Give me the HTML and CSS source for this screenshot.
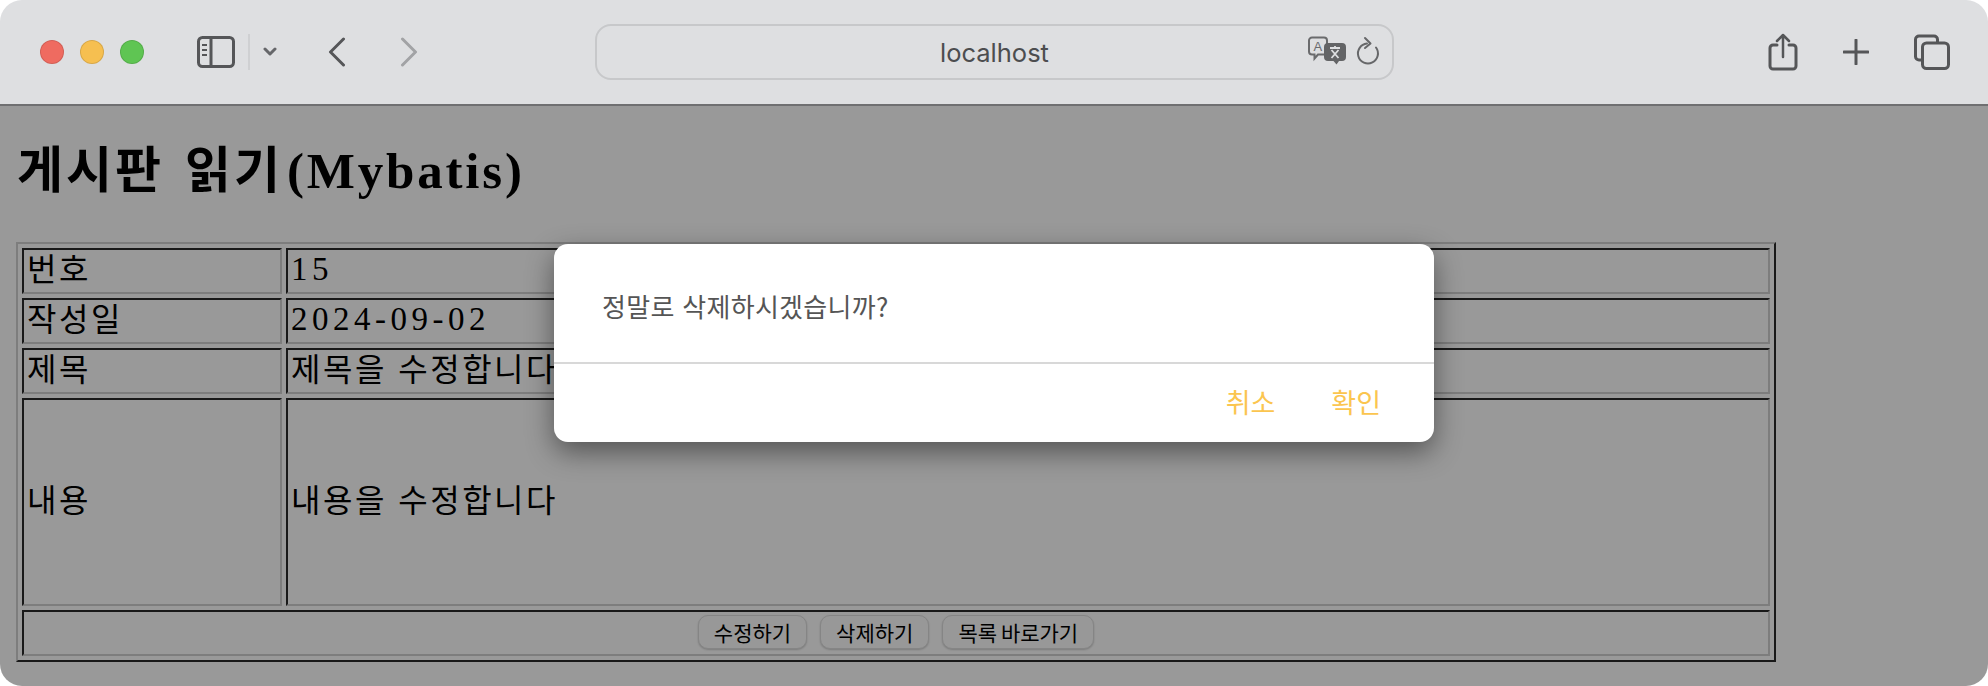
FILE: index.html
```html
<!DOCTYPE html>
<html lang="ko">
<head>
    <meta charset="UTF-8">
    <title>게시판 읽기</title>
    <link rel="stylesheet" href="styles.css">
</head>
<body>

<div class="window">
    <div class="toolbar">
        <span class="light red"></span>
        <span class="light yellow"></span>
        <span class="light green"></span>

        <svg class="ic-sidebar" width="38" height="32" viewBox="0 0 38 32" fill="none" stroke="#555658" stroke-width="3">
            <rect x="1.5" y="1.5" width="35" height="29" rx="4"/>
            <path d="M14 2v28"/>
            <path d="M5 9h5M5 14h5M5 19h5" stroke-width="2"/>
        </svg>
        <span class="sep"></span>
        <svg class="ic-down" width="14" height="10" viewBox="0 0 14 10" fill="none" stroke="#66676a" stroke-width="3" stroke-linecap="round" stroke-linejoin="round">
            <path d="M2 2l5 5 5-5"/>
        </svg>
        <svg class="ic-back" width="18" height="30" viewBox="0 0 18 30" fill="none" stroke="#555658" stroke-width="3" stroke-linecap="round" stroke-linejoin="round">
            <path d="M15.500 2L2.500 15l13 13"/>
        </svg>
        <svg class="ic-next" width="18" height="30" viewBox="0 0 18 30" fill="none" stroke="#a2a3a5" stroke-width="3" stroke-linecap="round" stroke-linejoin="round">
            <path d="M2.500 2l13 13-13 13"/>
        </svg>

        <div class="address">
            <span class="host">localhost</span>
            <div class="address-icons">
                <svg class="ic-translate" width="40" height="30" viewBox="0 0 40 30">
                    <path d="M4 1.500h12a3 3 0 0 1 3 3v11a3 3 0 0 1-3 3H10l-3.500 4v-4H4a3 3 0 0 1-3-3v-11a3 3 0 0 1 3-3z" fill="none" stroke="#6a6b6d" stroke-width="2"/>
                    <text x="5.500" y="15" class="ta">A</text>
                    <path d="M20 7h14a4 4 0 0 1 4 4v10a4 4 0 0 1-4 4h-3l-2.500 3.500-3-3.500H20a4 4 0 0 1-4-4V11a4 4 0 0 1 4-4z" fill="#636466"/>
                    <path d="M22 12h10M27 10v2M23.500 14l7 8M30.500 14l-7 8" fill="none" stroke="#dedfe1" stroke-width="1.800"/>
                </svg>
                <svg class="ic-reload" width="26" height="30" viewBox="0 0 26 30" fill="none" stroke="#666769" stroke-width="2" stroke-linecap="round" stroke-linejoin="round">
                    <path d="M12 7.500A10 10 0 1 0 21 11.500"/>
                    <path d="M10 2l5.500 5.500L10 12"/>
                </svg>
            </div>
        </div>

        <svg class="ic-share" width="30" height="38" viewBox="0 0 30 38" fill="none" stroke="#555658" stroke-width="3" stroke-linecap="round" stroke-linejoin="round">
            <path d="M9 12H5a3 3 0 0 0-3 3v18a3 3 0 0 0 3 3h20a3 3 0 0 0 3-3V15a3 3 0 0 0-3-3h-4"/>
            <path d="M15 24V2M9 8l6-6 6 6" stroke-width="2.500"/>
        </svg>
        <svg class="ic-plus" width="26" height="26" viewBox="0 0 26 26" fill="none" stroke="#555658" stroke-width="3" stroke-linecap="round">
            <path d="M13 1v24M1 13h24"/>
        </svg>
        <svg class="ic-tabs" width="36" height="36" viewBox="0 0 36 36" fill="none" stroke="#555658" stroke-width="3">
            <path d="M7 26H5a3.500 3.500 0 0 1-3.500-3.500v-17A3.500 3.500 0 0 1 5 2h15a3.500 3.500 0 0 1 3.500 3.500V9"/>
            <rect x="8.500" y="9" width="26" height="25.500" rx="4"/>
        </svg>
    </div>

    <div class="page">
        <h1>게시판 읽기<span class="latin">(Mybatis)</span></h1>

        <table class="board">
            <tr>
                <td class="label"><span class="cell-text">번호</span></td>
                <td><span class="latin">15</span></td>
            </tr>
            <tr>
                <td class="label"><span class="cell-text">작성일</span></td>
                <td><span class="latin">2024-09-02</span></td>
            </tr>
            <tr>
                <td class="label"><span class="cell-text">제목</span></td>
                <td><span class="cell-text">제목을 수정합니다</span></td>
            </tr>
            <tr class="tall">
                <td class="label"><span class="cell-text">내용</span></td>
                <td><span class="cell-text">내용을 수정합니다</span></td>
            </tr>
            <tr>
                <td colspan="2">
                    <div class="actions">
                        <button>수정하기</button>
                        <button>삭제하기</button>
                        <button>목록 바로가기</button>
                    </div>
                </td>
            </tr>
        </table>

        <div class="overlay"></div>

        <div class="dialog">
            <div class="dialog-body">정말로 삭제하시겠습니까?</div>
            <div class="dialog-footer">
                <span class="dialog-btn">취소</span>
                <span class="dialog-btn">확인</span>
            </div>
        </div>
    </div>
</div>

</body>
</html>
```

FILE: styles.css
```css
html, body {
    margin: 0;
    padding: 0;
    background-color: #fff;
}
.window {
    width: 1988px;
    height: 686px;
    border-radius: 22px;
    overflow: hidden;
    display: flex;
    flex-direction: column;
    font-family: "Noto Sans CJK KR", sans-serif;
}

/* browser chrome */
.toolbar {
    height: 104px;
    flex: none;
    display: flex;
    align-items: center;
    padding-left: 40px;
    background-color: #dedfe1;
    border-bottom: 2px solid #6f6f71;
}
.light {
    width: 22px;
    height: 22px;
    border-radius: 50%;
    border: 1px solid rgba(0,0,0,0.12);
    margin-right: 16px;
}
.red { background-color: #ef6b60; }
.yellow { background-color: #f6bf50; }
.green { background-color: #5fc553; }
.ic-sidebar { margin-left: 37px; }
.sep {
    width: 2px;
    height: 36px;
    margin-left: 13px;
    background-color: #cfd0d2;
}
.ic-down { margin-left: 13px; }
.ic-back { margin-left: 51px; }
.ic-next { margin-left: 54px; }
.address {
    width: 799px;
    height: 56px;
    box-sizing: border-box;
    margin-left: 177px;
    border: 2px solid #c7c8ca;
    border-radius: 16px;
    position: relative;
    display: flex;
    align-items: center;
    justify-content: center;
}
.host {
    font-family: Inter, sans-serif;
    font-size: 25.500px;
    color: #4c4d4f;
}
.address-icons {
    position: absolute;
    right: 11px;
    top: 10px;
    display: flex;
    gap: 7px;
}
.ta {
    font-family: "Liberation Sans", sans-serif;
    font-size: 13px;
    fill: #6a6b6d;
}
.ic-share { margin-left: 374px; }
.ic-plus { margin-left: 45px; }
.ic-tabs { margin-left: 45px; }

/* page */
.page {
    flex: 1;
    position: relative;
    padding-left: 16px;
    background-color: #fff;
    color: #000;
}
h1 {
    margin: 0;
    padding: 28px 0 0 1px;
    height: 136px;
    box-sizing: border-box;
    font-size: 50px;
    line-height: 64px;
    font-weight: bold;
    letter-spacing: 3px;
    word-spacing: 4px;
}
.latin {
    font-family: "Liberation Serif", serif;
}
h1 .latin {
    font-size: 51px;
    letter-spacing: 2.800px;
    margin-left: 4px;
}
.board {
    width: 1760px;
    box-sizing: border-box;
    border-collapse: separate;
    border-spacing: 4px;
    border: 2px solid;
    border-color: #d0d0d0 #2b2b2b #2b2b2b #d0d0d0;
    font-size: 32px;
    letter-spacing: 2.500px;
}
.board td {
    height: 46px;
    box-sizing: border-box;
    padding: 0 3px;
    line-height: 38px;
    border: 2px solid;
    border-color: #2b2b2b #d0d0d0 #d0d0d0 #2b2b2b;
}
.cell-text, .board .latin {
    position: relative;
    top: -4px;
}
.board .latin {
    font-size: 33px;
    letter-spacing: 4.500px;
}
.board .label {
    width: 260px;
}
.board .tall td {
    height: 208px;
}
.actions {
    display: flex;
    justify-content: center;
    gap: 13px;
    position: relative;
    top: -1px;
}
button {
    height: 34px;
    padding: 0 15px;
    font-family: "Noto Sans CJK KR", sans-serif;
    font-size: 21px;
    word-spacing: -2px;
    line-height: 30px;
    color: #000;
    background-color: #fdfdfd;
    border: 1px solid #dedede;
    border-radius: 10px;
    box-shadow: 0 1px 2px rgba(0,0,0,0.2);
}

/* confirm dialog */
.overlay {
    position: absolute;
    top: 0;
    left: 0;
    right: 0;
    bottom: 0;
    background-color: rgba(0,0,0,0.4);
}
.dialog {
    position: absolute;
    left: 554px;
    top: 138px;
    width: 880px;
    height: 198px;
    background-color: #fff;
    border-radius: 14px;
    box-shadow: 0 10px 28px rgba(0,0,0,0.45);
}
.dialog-body {
    height: 74px;
    padding: 44px 48px 0 48px;
    border-bottom: 2px solid #d8d8d8;
    font-size: 26px;
    letter-spacing: 0.300px;
    line-height: 36px;
    color: #555;
}
.dialog-footer {
    height: 74px;
    display: flex;
    justify-content: flex-end;
    align-items: center;
    gap: 56px;
    padding-right: 53px;
}
.dialog-btn {
    font-size: 27px;
    color: #fbc54f;
}
```
